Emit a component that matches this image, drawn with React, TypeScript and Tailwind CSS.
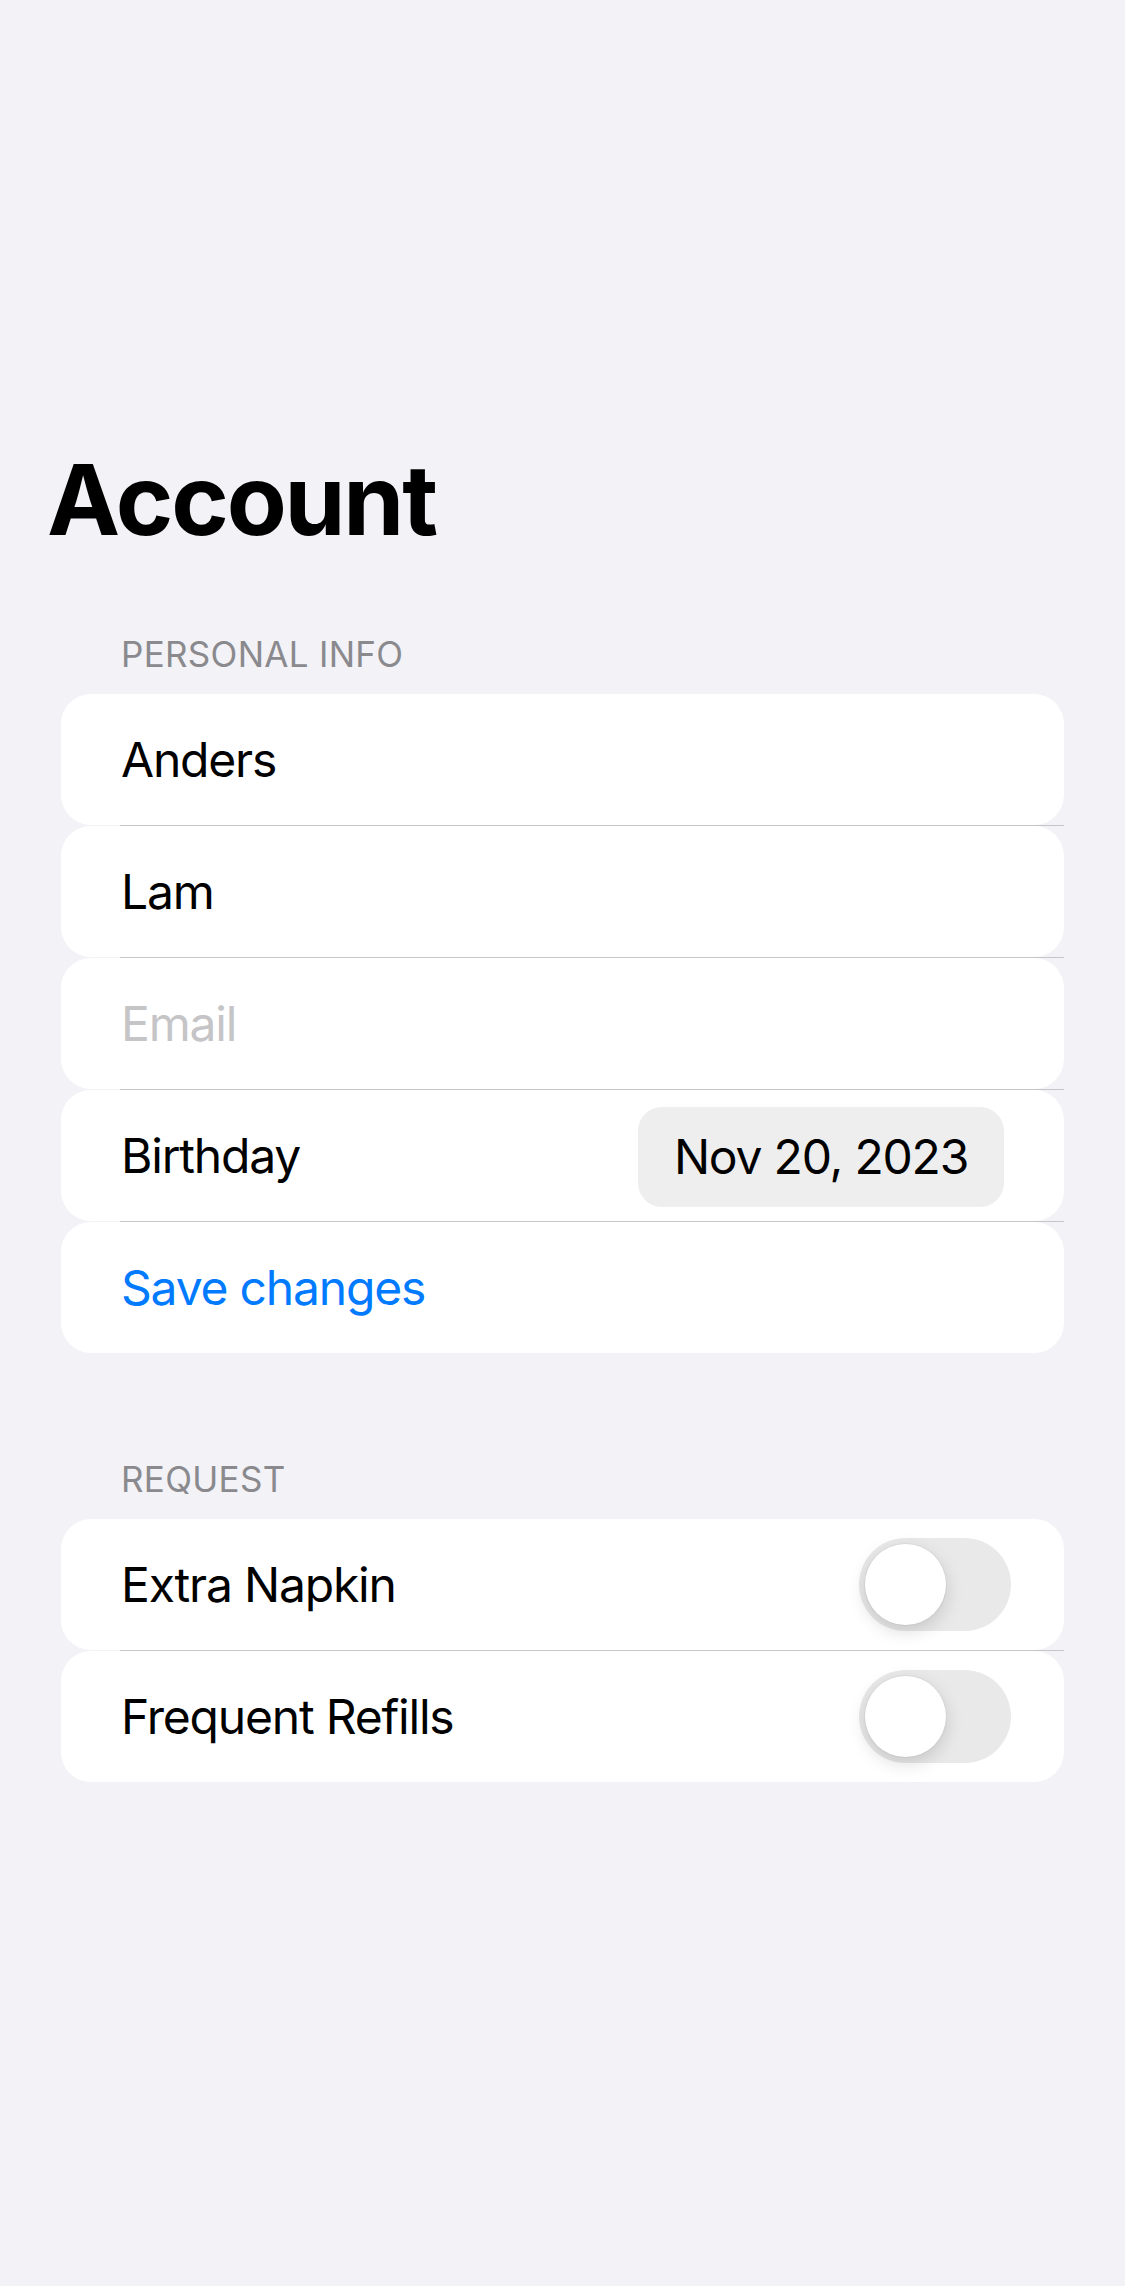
import React, { useState } from 'react';

type Row = { id: string; value: string; placeholder?: string };

const Separator = () => (
  <div className="flex h-px">
    <div className="w-[59px]" />
    <div className="flex-1 bg-[#c6c6c8]" />
  </div>
);

const Toggle = ({ on, onChange }: { on: boolean; onChange: () => void }) => (
  <button
    onClick={onChange}
    className={`relative w-[152px] h-[93px] rounded-full transition-colors ${on ? 'bg-[#34c759]' : 'bg-[#e9e9ea]'}`}
  >
    <span
      className={`absolute top-[6px] w-[81px] h-[81px] rounded-full bg-white shadow-[0_6px_18px_rgba(0,0,0,0.15),0_0_0_1px_rgba(0,0,0,0.04)] transition-all ${on ? 'left-[65px]' : 'left-[6px]'}`}
    />
  </button>
);

export default function App() {
  const [rows] = useState<Row[]>([
    { id: 'first', value: 'Anders' },
    { id: 'last', value: 'Lam' },
    { id: 'email', value: '', placeholder: 'Email' },
  ]);
  const [napkin, setNapkin] = useState(false);
  const [refills, setRefills] = useState(false);

  return (
    <div className="min-h-[2286px] bg-[#f2f2f7] pt-[451px] font-['Inter',sans-serif] text-black">
      <h1 className="pl-[47px] text-[98px] leading-none font-bold tracking-[-2.2px]">Account</h1>

      <div className="mt-[88px] pl-[121px] text-[35px] leading-none text-[#8a8a8e] uppercase tracking-[0.3px]">Personal Info</div>
      <div className="mt-[22px] mx-[61px] text-[48px] leading-none tracking-[-1.2px]">
        {rows.map((r) => (
          <React.Fragment key={r.id}>
            <div className="h-[131px] bg-white rounded-[30px] flex items-center pl-[60px]">
              {r.value ? r.value : <span className="text-[#c5c5c7]">{r.placeholder}</span>}
            </div>
            <Separator />
          </React.Fragment>
        ))}
        <div className="h-[131px] bg-white rounded-[30px] flex items-center justify-between pl-[60px] pr-[60px]">
          <span>Birthday</span>
          <span className="w-[366px] h-[100px] mt-[3px] rounded-[24px] bg-[#eeeeef] flex items-center justify-center">
            Nov 20, 2023
          </span>
        </div>
        <Separator />
        <div className="h-[131px] bg-white rounded-[30px] flex items-center pl-[60px] text-[#007aff]">
          Save changes
        </div>
      </div>

      <div className="mt-[109px] pl-[121px] text-[35px] leading-none text-[#8a8a8e] uppercase tracking-[0.3px]">Request</div>
      <div className="mt-[22px] mx-[61px] text-[48px] leading-none tracking-[-1.2px]">
        <div className="h-[131px] bg-white rounded-[30px] flex items-center justify-between pl-[60px] pr-[53px]">
          <span>Extra Napkin</span>
          <Toggle on={napkin} onChange={() => setNapkin(!napkin)} />
        </div>
        <Separator />
        <div className="h-[131px] bg-white rounded-[30px] flex items-center justify-between pl-[60px] pr-[53px]">
          <span>Frequent Refills</span>
          <Toggle on={refills} onChange={() => setRefills(!refills)} />
        </div>
      </div>
    </div>
  );
}
